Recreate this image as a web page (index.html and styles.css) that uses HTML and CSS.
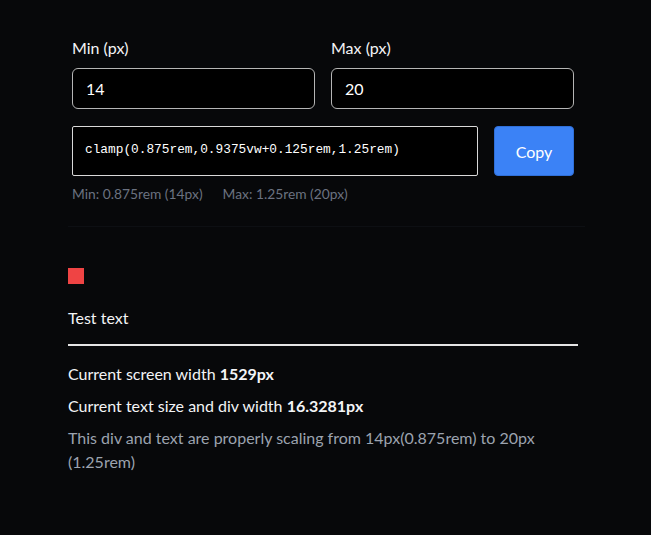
FILE: index.html
```html
<!DOCTYPE html>
<html lang="en">
<head>
<meta charset="utf-8">
<title>Clamp calculator</title>
<link rel="stylesheet" href="styles.css">
</head>
<body>
<main class="page">
  <section class="calc">
    <div class="fields">
      <label class="field">
        <span class="field-label">Min (px)</span>
        <input class="field-input" type="text" value="14">
      </label>
      <label class="field">
        <span class="field-label">Max (px)</span>
        <input class="field-input" type="text" value="20">
      </label>
    </div>
    <div class="output-row">
      <div class="code-box"><code>clamp(0.875rem,0.9375vw+0.125rem,1.25rem)</code></div>
      <button class="copy-btn" type="button">Copy</button>
    </div>
    <div class="hints">
      <span>Min: 0.875rem (14px)</span>
      <span>Max: 1.25rem (20px)</span>
    </div>
  </section>
  <section class="demo">
    <div class="square"></div>
    <p class="test-text">Test text</p>
    <div class="rule"></div>
    <p class="stat">Current screen width <strong>1529px</strong></p>
    <p class="stat">Current text size and div width <strong>16.3281px</strong></p>
    <p class="note">This div and text are properly scaling from 14px(0.875rem) to 20px (1.25rem)</p>
  </section>
</main>
</body>
</html>
```
FILE: styles.css
```css
* { box-sizing: border-box; }
html, body {
  margin: 0;
  background: #07080a;
}
body {
  font-family: Lato, "Noto Sans", sans-serif;
  color: #f3f4f6;
  font-size: 16px;
  line-height: 24px;
}
.page {
  width: 517px;
  margin-left: 68px;
  padding-top: 36px;
}
.calc {
  padding: 0 4px 22px;
  border-bottom: 1px solid #0d0f13;
  width: 517px;
}
.fields {
  display: grid;
  grid-template-columns: 1fr 1fr;
  gap: 16px;
  width: 502px;
}
.field {
  display: flex;
  flex-direction: column;
  gap: 8px;
}
.field-label {
  font-size: 16px;
  line-height: 24px;
  color: #f3f4f6;
}
.field-input {
  height: 41px;
  width: 100%;
  background: #000;
  border: 1px solid #b5b5b5;
  border-radius: 6px;
  color: #fff;
  font-family: inherit;
  font-size: 16px;
  padding: 0 13px;
  outline: none;
}
.output-row {
  display: flex;
  gap: 16px;
  margin-top: 17px;
  width: 502px;
}
.code-box {
  flex: 1;
  height: 50px;
  background: #000;
  border: 1px solid #d9d9d9;
  border-radius: 2px;
  display: flex;
  align-items: center;
  padding: 0 12px 2px;
}
.code-box code {
  font-family: "Liberation Mono", "DejaVu Sans Mono", monospace;
  font-size: 12.8px;
  color: #fff;
}
.copy-btn {
  width: 80px;
  height: 50px;
  background: #3b82f6;
  border: 1px solid #2f6fd8;
  border-radius: 4px;
  color: #fff;
  font-family: inherit;
  font-size: 16px;
}
.hints {
  display: flex;
  gap: 20px;
  margin-top: 8px;
  font-size: 13.8px;
  line-height: 20px;
  color: #6b7280;
}
.demo {
  padding-top: 41px;
  width: 510px;
}
.square {
  width: 16px;
  height: 16px;
  background: #ef4444;
}
.test-text {
  margin: 22px 0 0;
}
.rule {
  height: 2px;
  background: #e5e5e5;
  margin-top: 14px;
}
.stat {
  margin: 16px 0 0;
}
.stat + .stat {
  margin-top: 8px;
}
.stat strong {
  font-weight: 700;
}
.note {
  margin: 8px 0 0;
  color: #9ca3af;
}
```
